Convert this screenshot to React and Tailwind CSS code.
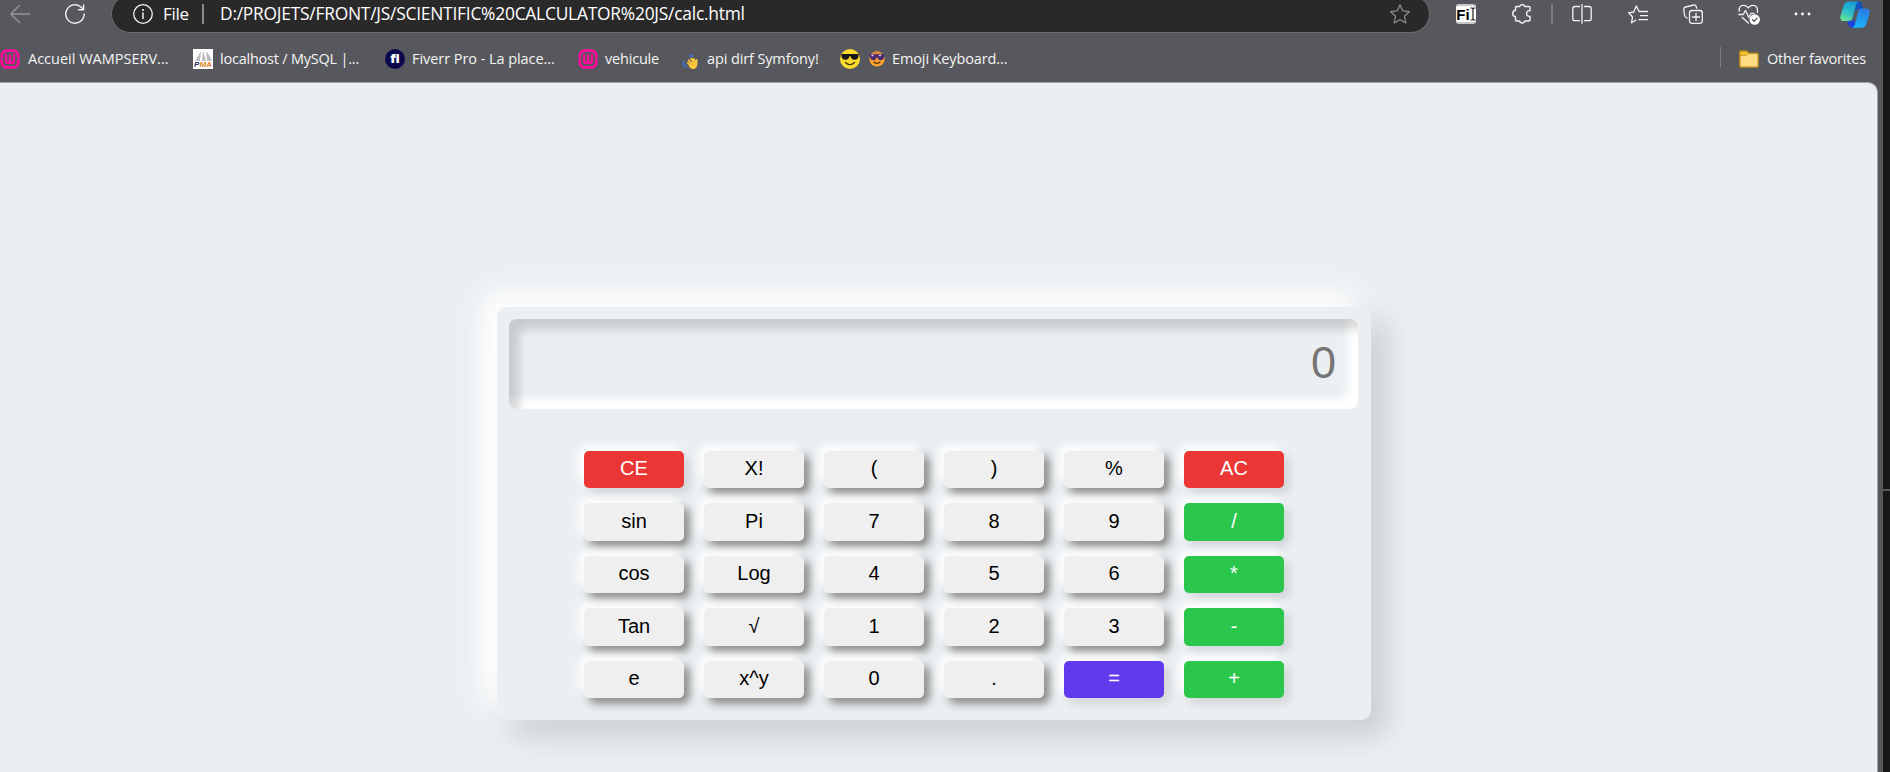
import React from "react";

const keys = [
  ["CE", "red"], ["X!", "plain"], ["(", "plain"], [")", "plain"], ["%", "plain"], ["AC", "red"],
  ["sin", "plain"], ["Pi", "plain"], ["7", "plain"], ["8", "plain"], ["9", "plain"], ["/", "green"],
  ["cos", "plain"], ["Log", "plain"], ["4", "plain"], ["5", "plain"], ["6", "plain"], ["*", "green"],
  ["Tan", "plain"], ["√", "plain"], ["1", "plain"], ["2", "plain"], ["3", "plain"], ["-", "green"],
  ["e", "plain"], ["x^y", "plain"], ["0", "plain"], [".", "plain"], ["=", "violet"], ["+", "green"],
];

const softShadow = "shadow-[-5px_-5px_10px_#fff,5px_5px_10px_rgba(0,0,0,0.12)]";
const tones = {
  plain: "bg-[#efefef] text-black shadow-[-5px_-5px_10px_#fff,5px_5px_10px_#7d7d79]",
  red: "bg-[#eb3636] text-white " + softShadow,
  green: "bg-[#2bc64c] text-white " + softShadow,
  violet: "bg-[#623aed] text-white " + softShadow,
};

function Icon({ className = "", size = 20, children }) {
  return (
    <svg className={"shrink-0 " + className} width={size} height={size} viewBox={`0 0 ${size} ${size}`} fill="none" stroke="#f2f2f2" strokeWidth="1.3" strokeLinecap="round" strokeLinejoin="round">
      {children}
    </svg>
  );
}

const Wamp = () => (
  <Icon>
    <rect x="1.7" y="1.700" width="16.600" height="16.600" rx="5" stroke="#ff0a9c" strokeWidth="2.800" />
    <path d="M0 9.500h4M16 9.500h4" stroke="#57585d" strokeWidth="1" />
    <path d="M6 5.500v6q0 2.500 2 2.500T10 11.500v-5M10 11.500q0 2.500 2 2.500t2-2.500v-6" stroke="#ff0a9c" strokeWidth="2.300" />
  </Icon>
);

const Pma = () => (
  <span className="flex h-5 w-5 shrink-0 flex-col items-center bg-white">
    <svg width="20" height="12" viewBox="0 0 20 12">
      <path d="M8 2 2 12h5zM10 1l-1 11h4zM13 2l1 10h5q-2-6-6-10z" fill="#bdbdbd" />
    </svg>
    <span className="font-['Liberation_Sans'] text-[8px] font-bold italic leading-[7px] text-[#2b2b5c]">
      P<span className="text-[#d9811a]">MA</span>
    </span>
  </span>
);

const Fiverr = () => (
  <span className="flex h-5 w-5 shrink-0 items-center justify-center rounded-full bg-[#0d084d] pb-px font-['Open_Sans'] text-[13px] font-extrabold leading-none text-white"><span>f</span><span>i</span></span>
);

const Wave = () => (
  <Icon>
    <path d="M4 13q-2 3 2 4.500M10 7q1-1 2 0" stroke="#4270c4" strokeWidth="2.200" />
    <g transform="translate(3.200 4.200) scale(.84)">
      <path d="M5.500 11.500 9 15M6.500 8.500l5 5M9.500 6.500l4 5M12.500 7l2.500 4" stroke="#ffc83d" strokeWidth="2.200" />
      <path d="M7 13l6-5 2 1 .8-2.500q1.700.5 1.200 4.500 0 7-4.500 8-2.500.3-5.500-3z" fill="#ffc83d" stroke="none" />
      <path d="M8.800 11.500l2.500 2.500M11.300 9.500l2 2.500" stroke="#d99a20" strokeWidth=".7" />
    </g>
  </Icon>
);

const CoolFace = () => (
  <Icon>
    <circle cx="10" cy="10" r="10" fill="#fddb2c" stroke="none" />
    <path d="M1.500 5h17v2.200q-.5 3.600-4 3.600-3.300 0-3.900-3.600H9.400Q8.800 10.800 5.500 10.800 2 10.800 1.500 7.200z" fill="#171717" stroke="none" />
    <path d="M5.500 13.500q4.500 4.300 9 0" stroke="#3b2c10" strokeWidth="1.300" />
  </Icon>
);

const CoolFaceSmall = () => (
  <Icon size={16}>
    <circle cx="8" cy="8" r="7.600" fill="#ffa32b" stroke="none" />
    <path d="M.3 7Q2 .3 8 .3T15.700 7z" fill="#d98b3a" stroke="none" />
    <path d="M.5 3.200h15l-.6 3.500Q14 9.200 11.500 9.200 9 9.200 8.500 6.500h-1Q7 9.200 4.500 9.200 2 9.200 1.100 6.700z" fill="#4a2a75" stroke="none" />
    <path d="M3 4.500h1M10.500 4.500h1" stroke="#e8d6ff" />
    <path d="M5 11q3 2.800 6 0" stroke="#5b2b12" strokeWidth="1.200" />
  </Icon>
);

function Bookmark({ icon, label, box, track }) {
  return (
    <div className={"flex h-5 shrink-0 items-center gap-[7px] whitespace-nowrap " + box}>
      {icon}
      <span className={track}>{label}</span>
    </div>
  );
}

function Toolbar() {
  return (
    <div className="-mt-[5px] flex h-[38px] shrink-0 items-center">
      <Icon className="ml-[10px]">
        <path d="M20 10H.8M9.500 1.500.8 10l8.700 8.500" stroke="#96979a" />
      </Icon>
      <Icon className="ml-[35px]">
        <path d="M19.200 10a9.200 9.200 0 1 1-3-6.800L18.600 5.500M18.600 1v4.700h-5" strokeWidth="1.400" />
      </Icon>
      <div className="ml-[26px] flex h-[38px] w-[1319px] shrink-0 items-center rounded-full border border-[#6c6d70] bg-[#292929] text-[17.400px] text-white">
        <Icon className="ml-[21px]">
          <circle cx="10" cy="10" r="9.300" />
          <path d="M10 9v5.500" strokeWidth="1.500" />
          <circle cx="10" cy="6" r="1" fill="#fff" stroke="none" />
        </Icon>
        <span className="ml-[10px] w-[27px] text-[17px] tracking-[-0.300px]">File</span>
        <span className="ml-[12px] h-5 w-[2px] bg-[#8a8a8a]" />
        <span className="-mt-0.5 ml-[16px] flex-1 whitespace-nowrap tracking-[-0.240px]">D:/PROJETS/FRONT/JS/SCIENTIFIC%20CALCULATOR%20JS/calc.html</span>
        <Icon className="mr-[19px]">
          <path d="m10 .8 2.800 6.100 6.500.8-4.800 4.600 1.300 6.700L10 15.700 4.200 19l1.300-6.700L.7 7.700l6.500-.8z" stroke="#8f8f8f" strokeWidth="1.200" />
        </Icon>
      </div>
      <div className="ml-[26px] flex h-5 w-5 shrink-0 items-center justify-center rounded-[3px] border-y-2 border-[#c8c8c8] bg-white font-['Liberation_Sans'] text-[15px] font-bold leading-none text-black">
        Fi
        <svg width="6" height="14" viewBox="0 0 6 14" fill="none" stroke="#222" strokeWidth="1.200">
          <path d="M.5 1h1.700l.8.800.8-.8h1.700M3 1.800v10.400M.5 13h1.700l.8-.8.8.8h1.700" />
        </svg>
      </div>
      <Icon className="ml-[36px]">
        <path d="M3.500 6.200V3.500q0-1 1-1h3.200Q8 .7 10.200.7t2.500 1.800H17q1 0 1 1v3.200q-3.400-.3-3.400 2.800t3.400 2.800v3.700q0 1-1 1h-4.300q-.3 2-2.500 2T7.700 17H4.500q-1 0-1-1v-3.200Q.7 12.500.7 9.500T3.500 6.200z" strokeWidth="1.400" />
      </Icon>
      <span className="ml-[19px] h-5 w-[2px] shrink-0 bg-[#7f8084]" />
      <Icon className="ml-[19px]">
        <path d="M7.500 2.500H3q-2.200 0-2.200 2.200V14.500q0 2.200 2.200 2.200h4.500M12.500 2.500H17q2.200 0 2.200 2.200V14.500q0 2.200-2.200 2.200h-4.500M10 .5v18.700" />
      </Icon>
      <Icon className="ml-[36px]">
        <path d="M7.800 16.200 3.500 18.800l1-5.800L.7 8.800l5-.8L8.300 2l2.800 5.500H20M12.500 11.700H20M11 15.700h9" />
      </Icon>
      <Icon className="ml-[35px]">
        <rect x="6.500" y="6.500" width="12.800" height="12.800" rx="2.500" />
        <path d="M13 9.500v7M9.500 13h7M4.200 14 2.900 13.300Q1.900 12.700 1.600 11.400L.8 5.500Q.6 3.500 2.500 3L10.800 1q1.800-.3 2.400 1.500l.5 1.700" />
      </Icon>
      <Icon className="ml-[35px] mt-[2px]" size={22}>
        <path d="M1.200 7.200Q.5 1.300 5.500 1.300 8.700 1.300 10.300 4 12 1.300 15 1.300q5 0 4.500 7M.8 10.500h4.400l2.300-4 3.300 7 2.200-4.200h3M4.300 13.500l6 5.500" />
        <circle cx="16.700" cy="15.500" r="5.200" fill="#fff" stroke="none" />
        <path d="m14.400 15.600 1.700 1.700 3-3.200" stroke="#3c3c3c" strokeWidth="1.100" />
      </Icon>
      <Icon className="ml-[33px]">
        <circle cx="3" cy="10" r="1.400" fill="#fff" stroke="none" />
        <circle cx="9.500" cy="10" r="1.400" fill="#fff" stroke="none" />
        <circle cx="16" cy="10" r="1.400" fill="#fff" stroke="none" />
      </Icon>
      <svg className="ml-[27px] shrink-0" width="30" height="27" viewBox="0 0 30 27">
        <defs>
          <linearGradient id="leaf" x1="0.600" y1="0" x2="0.200" y2="1">
            <stop offset="0" stopColor="#159bd8" />
            <stop offset="0.550" stopColor="#2cc3c8" />
            <stop offset="1" stopColor="#6fe38a" />
          </linearGradient>
          <linearGradient id="wing" x1="0.600" y1="0" x2="0.400" y2="1">
            <stop offset="0" stopColor="#2a7be4" />
            <stop offset="1" stopColor="#1bb4fb" />
          </linearGradient>
        </defs>
        <path d="M16 .5h3q2 0 2.800 2l1.500 5.500H19q-3 0-4 4z" fill="#1453bd" />
        <path d="M7 20h6l1.500-3 1 9.500H12q-2.500 0-3.300-2.500z" fill="#1a45e0" />
        <path d="M9 .5h9.500q-2 1-2.700 4L12.500 17q-.8 3-4 3H4q-4.500 0-3.500-5L3.800 4.500Q5 .5 9 .5z" fill="url(#leaf)" />
        <path d="M21 7.500h5q4.500 0 3.500 5L26.300 23q-1.200 3.700-5 3.700H12.500q2-1 2.700-4L18 11q.8-3.500 3-3.500z" fill="url(#wing)" />
      </svg>
    </div>
  );
}

function Favorites() {
  return (
    <div className="flex h-[49px] shrink-0 pt-4 text-[14.500px] text-[#f4f4f4]">
      <Bookmark icon={<Wamp />} label="Accueil WAMPSERV..." box="w-[193px]" track="pl-px" />
      <Bookmark icon={<Pma />} label="localhost / MySQL |..." box="w-[192px]" track="tracking-[-0.220px]" />
      <Bookmark icon={<Fiverr />} label="Fiverr Pro - La place..." box="w-[193px]" track="tracking-[-0.060px]" />
      <Bookmark icon={<Wamp />} label="vehicule" box="w-[102px]" track="tracking-[-0.200px]" />
      <Bookmark icon={<Wave />} label="api dirf Symfony!" box="w-[160px]" track="tracking-[-0.120px]" />
      <Bookmark icon={<CoolFace />} label={<span className="flex items-center gap-[7px]"><CoolFaceSmall />Emoji Keyboard...</span>} box="w-[200px]" track="pl-[2px] tracking-[-0.120px]" />
      <div className="ml-auto flex h-5 items-center">
        <span className="-mt-1 h-5 w-px bg-[#7f8084]" />
        <Icon className="ml-[18px]">
          <path d="M.8 17V3.200Q.8 2 2 2h5q.7 0 1.200.7L9.500 4.200H18q1.200 0 1.200 1.200V17q0 1.200-1.200 1.200H2Q.8 18.200.8 17z" fill="#ffdc84" stroke="#b98712" />
          <path d="M1 6.300h6.300l2.200-2L8 2.300H1.500z" fill="#f6c431" stroke="#b98712" strokeWidth=".8" />
        </Icon>
        <span className="ml-[8px] w-[116px] whitespace-nowrap tracking-[-0.200px]">Other favorites</span>
      </div>
    </div>
  );
}

function Calculator() {
  return (
    <main className="flex h-[413px] w-[874px] shrink-0 flex-col items-center rounded-[10px] bg-[#ebeff2] pt-3 font-['Liberation_Sans',Arial,sans-serif] shadow-[-15px_-15px_30px_#fff,15px_15px_30px_rgba(0,0,0,0.150)]">
      <div className="-ml-px flex h-[90px] w-[849px] items-center justify-end rounded-[8px] pb-[3px] pr-[22px] text-[45px] leading-none text-[#757575] shadow-[inset_10px_10px_10px_rgba(0,0,0,0.150),inset_-10px_-10px_10px_#fff]">0</div>
      <div className="mt-[41.600px] grid grid-cols-[repeat(6,100px)] gap-x-5 gap-y-[15px]">
        {keys.map(([label, tone]) => (
          <button key={label} className={"flex h-[37.500px] items-center justify-center rounded-[5px] pb-[2px] text-[20px] leading-none " + tones[tone]}>
            {label}
          </button>
        ))}
      </div>
    </main>
  );
}

export default function App() {
  return (
    <div className="flex h-[772px] w-[1890px] overflow-hidden bg-[#171717] font-['Open_Sans',sans-serif]">
      <div className="flex w-[1883px] shrink-0 flex-col overflow-hidden bg-[#57585d]">
        <Toolbar />
        <Favorites />
        <div className="mr-[5px] flex flex-1 justify-center overflow-hidden rounded-tr-[10px] border-r border-t border-[#a2a4a8] bg-[#ebeff2] pr-[9px] pt-[224px]">
          <Calculator />
        </div>
      </div>
      <div className="flex-1">
        <div className="h-[491px] border-b-2 border-[#5a5a5a]" />
      </div>
    </div>
  );
}
